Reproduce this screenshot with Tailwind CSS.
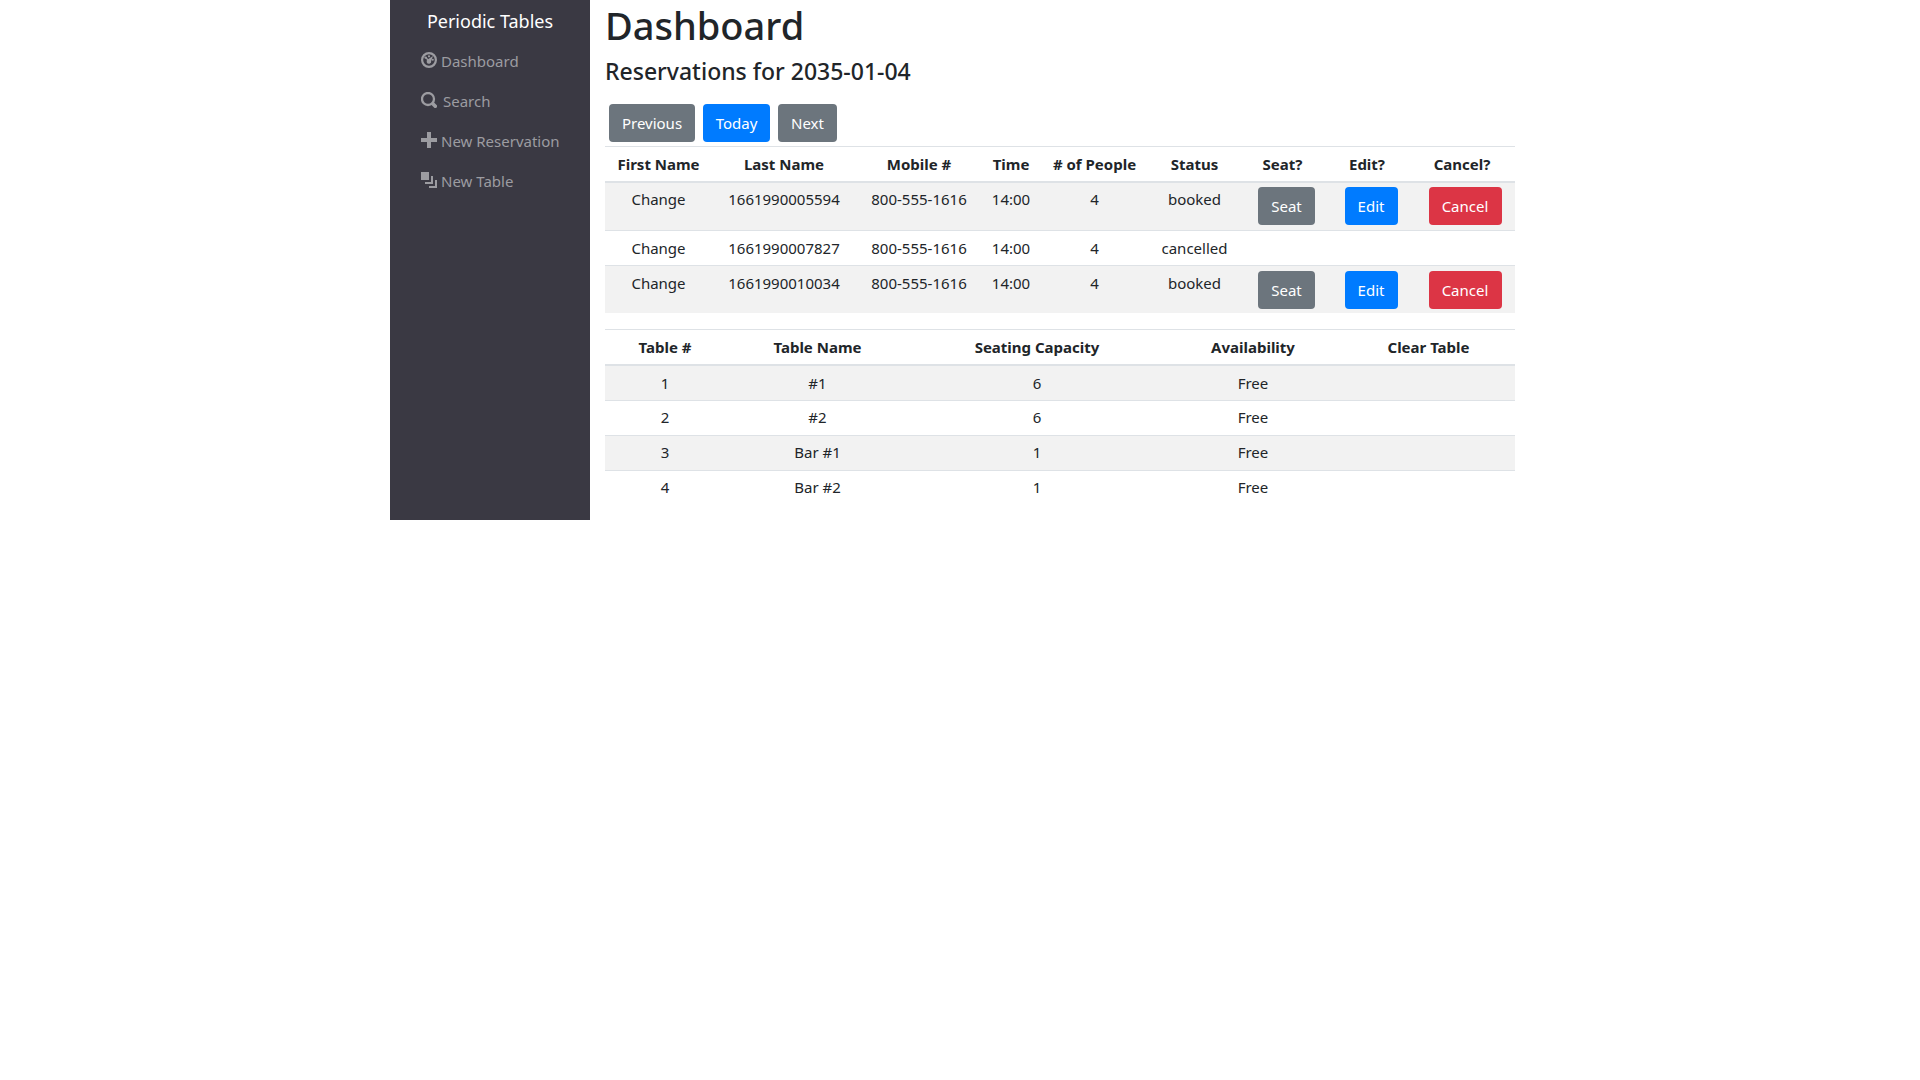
<!DOCTYPE html>
<html lang="en">
<head>
<meta charset="utf-8">
<meta name="viewport" content="width=device-width, initial-scale=1">
<title>Periodic Tables</title>
<script src="https://cdn.jsdelivr.net/npm/@tailwindcss/browser@4"></script>
</head>
<body class="bg-white font-['Noto_Sans',sans-serif] text-[15px] leading-6 text-[#212529]">
<div class="mx-auto flex max-w-[1140px]">
  <nav class="w-[200px] shrink-0 bg-[#3a3943]">
    <a href="#" class="block pt-2 text-center text-lg leading-[26px] text-white">Periodic Tables</a>
    <ul class="ml-[31px] mt-[7px] text-[#9c9ca1]">
      <li><a href="#" class="flex h-10 items-center gap-1">
        <svg class="mb-[2px] size-4" viewBox="0 0 16 16" fill="none" stroke="currentColor" aria-hidden="true"><circle cx="8" cy="8" r="6.9" stroke-width="2.2"/><g fill="currentColor" stroke="none"><circle cx="8" cy="4.3" r="1.1"/><circle cx="4.6" cy="5.6" r="1.2"/><circle cx="11.8" cy="7.8" r="1"/><path d="M12 4 10.2 9A2.3 2.3 0 1 1 7 7.3z"/></g><path d="m4.6 5.6 3 3" stroke-width="1.4"/></svg>
        Dashboard</a></li>
      <li><a href="#" class="flex h-10 items-center gap-[6px]">
        <svg class="mb-[2px] size-4" viewBox="0 0 16 16" fill="none" stroke="currentColor" aria-hidden="true"><circle cx="7" cy="7" r="6" stroke-width="2.3"/><path d="m11.8 11.8 2.5 2.5" stroke-width="3.6" stroke-linecap="round"/></svg>
        Search</a></li>
      <li><a href="#" class="flex h-10 items-center gap-1">
        <svg class="mb-[2px] size-4" viewBox="0 0 16 16" fill="currentColor" aria-hidden="true"><path d="M6 0h4v6h6v4h-6v6H6v-6H0V6h6z"/></svg>
        New Reservation</a></li>
      <li><a href="#" class="flex h-10 items-center gap-1">
        <svg class="mb-[2px] size-4" viewBox="0 0 16 16" fill="currentColor" aria-hidden="true"><path d="M0 0h8v8H0zM10 4h2v8H4v-2h6zM14 8h2v8H8v-2h6z"/></svg>
        New Table</a></li>
    </ul>
  </nav>
  <main class="min-w-0 flex-1 px-[15px] pb-[15px]">
    <h1 class="mb-2 text-[38px] font-medium leading-[50px]">Dashboard</h1>
    <h4 class="text-[23px] font-medium leading-[26px]">Reservations for 2035-01-04</h4>
    <div class="mb-1 ml-1 mt-5 flex gap-2">
      <button type="button" class="h-[38px] w-[86px] rounded bg-[#6c757d] text-white">Previous</button>
      <button type="button" class="h-[38px] w-[67px] rounded bg-[#007bff] text-white">Today</button>
      <button type="button" class="h-[38px] w-[59px] rounded bg-[#6c757d] text-white">Next</button>
    </div>
    <table class="mb-4 w-full table-fixed border-separate border-spacing-0 text-center leading-[25px] [&_th]:border-b-2 [&_th]:border-t [&_th]:border-[#dee2e6] [&_th]:pb-1 [&_th]:pt-[5px]">
      <colgroup><col class="w-[107px]"><col class="w-[144px]"><col class="w-[126px]"><col class="w-[58px]"><col class="w-[109px]"><col class="w-[91px]"><col class="w-[85px]"><col class="w-[84px]"><col class="w-[106px]"></colgroup>
      <thead><tr><th>First Name</th><th>Last Name</th><th>Mobile #</th><th>Time</th><th># of People</th><th>Status</th><th>Seat?</th><th>Edit?</th><th>Cancel?</th></tr></thead>
      <tbody class="[&>tr:nth-child(odd)]:bg-[#f2f2f2] [&>tr>td]:align-top [&>tr:first-child>td]:pb-[5px] [&>tr:first-child>td]:pt-1 [&>tr+tr>td]:border-t [&>tr+tr>td]:border-[#dee2e6] [&>tr+tr>td]:pb-1 [&>tr+tr>td]:pt-[5px]">
        <tr><td>Change</td><td>1661990005594</td><td>800-555-1616</td><td>14:00</td><td>4</td><td>booked</td>
          <td><button type="button" class="ml-2 h-[38px] w-[57px] rounded bg-[#6c757d] align-top text-white">Seat</button></td>
          <td><button type="button" class="ml-2 h-[38px] w-[53px] rounded bg-[#007bff] align-top text-white">Edit</button></td>
          <td><button type="button" class="ml-[6px] h-[38px] w-[73px] rounded bg-[#dc3545] align-top text-white">Cancel</button></td></tr>
        <tr><td>Change</td><td>1661990007827</td><td>800-555-1616</td><td>14:00</td><td>4</td><td>cancelled</td><td></td><td></td><td></td></tr>
        <tr><td>Change</td><td>1661990010034</td><td>800-555-1616</td><td>14:00</td><td>4</td><td>booked</td>
          <td><button type="button" class="ml-2 h-[38px] w-[57px] rounded bg-[#6c757d] align-top text-white">Seat</button></td>
          <td><button type="button" class="ml-2 h-[38px] w-[53px] rounded bg-[#007bff] align-top text-white">Edit</button></td>
          <td><button type="button" class="ml-[6px] h-[38px] w-[73px] rounded bg-[#dc3545] align-top text-white">Cancel</button></td></tr>
      </tbody>
    </table>
    <table class="w-full table-fixed border-separate border-spacing-0 text-center leading-[25px] [&_th]:border-b-2 [&_th]:border-t [&_th]:border-[#dee2e6] [&_th]:pb-1 [&_th]:pt-[5px]">
      <colgroup><col class="w-[120px]"><col class="w-[185px]"><col class="w-[254px]"><col class="w-[178px]"><col class="w-[173px]"></colgroup>
      <thead><tr><th>Table #</th><th>Table Name</th><th>Seating Capacity</th><th>Availability</th><th>Clear Table</th></tr></thead>
      <tbody class="[&>tr:nth-child(odd)]:bg-[#f2f2f2] [&>tr:first-child>td]:pb-1 [&>tr:first-child>td]:pt-[5px] [&>tr+tr>td]:border-t [&>tr+tr>td]:border-[#dee2e6] [&>tr+tr>td]:pb-[5px] [&>tr+tr>td]:pt-1">
        <tr><td>1</td><td>#1</td><td>6</td><td>Free</td><td></td></tr>
        <tr><td>2</td><td>#2</td><td>6</td><td>Free</td><td></td></tr>
        <tr><td>3</td><td>Bar #1</td><td>1</td><td>Free</td><td></td></tr>
        <tr><td>4</td><td>Bar #2</td><td>1</td><td>Free</td><td></td></tr>
      </tbody>
    </table>
  </main>
</div>
</body>
</html>
